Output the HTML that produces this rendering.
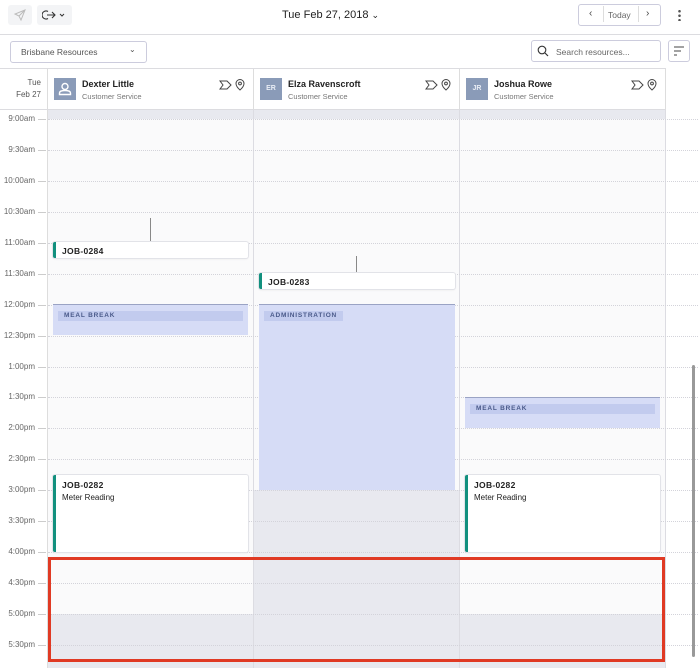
<!DOCTYPE html>
<html><head><meta charset="utf-8"><style>
*{box-sizing:border-box;margin:0;padding:0}
body{width:700px;height:668px;overflow:hidden;background:#fff;font-family:"Liberation Sans",sans-serif;position:relative;color:#222}
.a{position:absolute}
.btn{border:1px solid #ccd;border-radius:3px;background:#fff}
.tl{position:absolute;left:0;width:35px;text-align:right;font-size:8px;color:#666}
.tick{position:absolute;left:38px;width:8px;height:1px;background:#ccc}
.hl{position:absolute;left:48px;width:650px;height:0;border-top:1px dotted #d3d3da}
.job{position:absolute;background:#fff;border-radius:2px;box-shadow:0 0 0 1px #e2e3e8,0 1px 2px rgba(0,0,0,.08);border-left:3px solid #12907e;font-size:8px;padding:5px 0 0 6px}
.job b{font-size:8.5px;letter-spacing:.3px}
.brk{position:absolute;background:#d6dcf6;border-top:1px solid #9aa3c4}
.brk span{position:absolute;left:5px;top:6px;height:10px;background:#c2cbee;font-size:6.5px;letter-spacing:.8px;color:#4a5a8a;padding:1px 6px;font-weight:bold}
.hd{position:absolute;top:69px;height:41px;border-right:1px solid #ddd}
.av{position:absolute;left:6px;top:9px;width:22px;height:22px;background:#8a9bb8;color:#e9edf5;font-size:7px;text-align:center;line-height:22px;font-weight:bold}
.nm{position:absolute;left:34px;top:10px;font-size:9px;font-weight:bold;color:#222}
.sb{position:absolute;left:34px;top:23px;font-size:7.5px;color:#777}
</style></head><body>
<div class="a" style="left:8px;top:5px;width:24px;height:20px;background:#f3f4f6;border-radius:3px"></div>
<svg class="a" style="left:13px;top:8px" width="14" height="14" viewBox="0 0 14 14"><path d="M12 2L2 6l4 2 2 4z M6 8l6-6" fill="none" stroke="#bbb" stroke-width="1"/></svg>
<div class="a" style="left:37px;top:5px;width:35px;height:20px;background:#f3f4f6;border-radius:3px"></div>
<svg class="a" style="left:42px;top:8px" width="26" height="14" viewBox="0 0 26 14"><path d="M6 3.5A4 4 0 1 0 6 10.5 M5 7h8 M10 4l3 3-3 3" fill="none" stroke="#333" stroke-width="1.1"/><path d="M18 6l2 2 2-2" fill="none" stroke="#333" stroke-width="1"/></svg>
<div class="a" style="left:282px;top:9px;font-size:11px;color:#222">Tue Feb 27, 2018 <span style="font-size:9px">⌄</span></div>
<div class="a btn" style="left:578px;top:4px;width:83px;height:22px"></div>
<div class="a" style="left:589px;top:8px;font-size:10px;color:#444">‹</div>
<div class="a" style="left:603px;top:6px;width:1px;height:16px;background:#ddd"></div>
<div class="a" style="left:608px;top:10px;font-size:8.5px;color:#666">Today</div>
<div class="a" style="left:638px;top:6px;width:1px;height:16px;background:#ddd"></div>
<div class="a" style="left:646px;top:8px;font-size:10px;color:#444">›</div>
<div class="a" style="left:678px;top:9px;width:3px;height:12px;background:radial-gradient(circle,#555 1.2px,transparent 1.4px) 0 0/3px 4.5px"></div>
<div class="a" style="left:0;top:34px;width:700px;height:1px;background:#dcdce0"></div>
<div class="a btn" style="left:10px;top:41px;width:137px;height:22px;background:#fff"></div>
<div class="a" style="left:21px;top:47px;font-size:8.5px;color:#555">Brisbane Resources</div>
<div class="a" style="left:129px;top:45px;font-size:8px;color:#555">⌄</div>
<div class="a btn" style="left:531px;top:40px;width:130px;height:22px"></div>
<svg class="a" style="left:537px;top:45px" width="12" height="12" viewBox="0 0 12 12"><circle cx="5" cy="5" r="3.8" fill="none" stroke="#333" stroke-width="1.1"/><path d="M8 8l3 3" stroke="#333" stroke-width="1.2"/></svg>
<div class="a" style="left:556px;top:47px;font-size:8.5px;color:#666">Search resources...</div>
<div class="a btn" style="left:668px;top:40px;width:22px;height:22px"></div>
<svg class="a" style="left:672px;top:45px" width="14" height="12" viewBox="0 0 14 12"><path d="M2 2h10M2 6h7M2 10h3" stroke="#444" stroke-width="1"/></svg>
<div class="a" style="left:0;top:68px;width:666px;height:1px;background:#dcdce0"></div>
<div class="a" style="left:0;top:77px;width:41px;text-align:right;font-size:8px;color:#555;line-height:12px">Tue<br>Feb 27</div>
<div class="a" style="left:47px;top:69px;width:1px;height:599px;background:#ddd"></div>
<div class="hd" style="left:48px;width:206px"><div class="av"><svg width="22" height="22" viewBox="0 0 22 22"><circle cx="11" cy="8.5" r="3" fill="none" stroke="#fff" stroke-width="1.4"/><path d="M5.5 16.5v-1.5c0-1.5 2-2.5 5.5-2.5s5.5 1 5.5 2.5v1.5z" fill="none" stroke="#fff" stroke-width="1.4"/></svg></div><div class="nm">Dexter Little</div><div class="sb">Customer Service</div></div>
<div class="hd" style="left:254px;width:206px"><div class="av">ER</div><div class="nm">Elza Ravenscroft</div><div class="sb">Customer Service</div></div>
<div class="hd" style="left:460px;width:206px"><div class="av">JR</div><div class="nm">Joshua Rowe</div><div class="sb">Customer Service</div></div>
<svg class="a" style="left:218px;top:78px" width="30" height="14" viewBox="0 0 30 14"><path d="M2 3h7l4 4-4 4H2l3-4z" fill="none" stroke="#444" stroke-width="1"/><path d="M22 12s-4-3.5-4-6.5a4 4 0 0 1 8 0c0 3-4 6.5-4 6.5z" fill="none" stroke="#444" stroke-width="1"/><circle cx="22" cy="5.5" r="1.4" fill="none" stroke="#444"/></svg>
<svg class="a" style="left:424px;top:78px" width="30" height="14" viewBox="0 0 30 14"><path d="M2 3h7l4 4-4 4H2l3-4z" fill="none" stroke="#444" stroke-width="1"/><path d="M22 12s-4-3.5-4-6.5a4 4 0 0 1 8 0c0 3-4 6.5-4 6.5z" fill="none" stroke="#444" stroke-width="1"/><circle cx="22" cy="5.5" r="1.4" fill="none" stroke="#444"/></svg>
<svg class="a" style="left:630px;top:78px" width="30" height="14" viewBox="0 0 30 14"><path d="M2 3h7l4 4-4 4H2l3-4z" fill="none" stroke="#444" stroke-width="1"/><path d="M22 12s-4-3.5-4-6.5a4 4 0 0 1 8 0c0 3-4 6.5-4 6.5z" fill="none" stroke="#444" stroke-width="1"/><circle cx="22" cy="5.5" r="1.4" fill="none" stroke="#444"/></svg>
<div class="a" style="left:0;top:109px;width:666px;height:1px;background:#dcdce0"></div>
<div class="a" style="left:48px;top:110px;width:618px;height:558px;background:#fafafb"></div>
<div class="a" style="left:48px;top:110px;width:618px;height:9px;background:#e8e9ef"></div>
<div class="a" style="left:254px;top:490px;width:206px;height:178px;background:#e8e9ef"></div>
<div class="a" style="left:48px;top:614px;width:618px;height:54px;background:#e8e9ef"></div>
<div class="a" style="left:253px;top:110px;width:1px;height:558px;background:#dcdce2"></div>
<div class="a" style="left:459px;top:110px;width:1px;height:558px;background:#dcdce2"></div>
<div class="a" style="left:665px;top:110px;width:1px;height:558px;background:#dcdce2"></div>
<div id="g"></div>
<script>
var L=["9:00am","9:30am","10:00am","10:30am","11:00am","11:30am","12:00pm","12:30pm","1:00pm","1:30pm","2:00pm","2:30pm","3:00pm","3:30pm","4:00pm","4:30pm","5:00pm","5:30pm"],h="";
for(var i=0;i<L.length;i++){var y=Math.round(119+i*30.94);h+='<div class="hl" style="top:'+y+'px"></div><div class="tick" style="top:'+y+'px"></div><div class="tl" style="top:'+(y-5)+'px">'+L[i]+'</div>';}
document.getElementById("g").innerHTML=h;
</script>
<div class="a" style="left:150px;top:218px;width:1px;height:24px;background:#888"></div>
<div class="job" style="left:53px;top:242px;width:195px;height:16px;padding-top:4px"><b>JOB-0284</b></div>
<div class="a" style="left:356px;top:256px;width:1px;height:17px;background:#888"></div>
<div class="job" style="left:259px;top:273px;width:196px;height:16px;padding-top:4px"><b>JOB-0283</b></div>
<div class="brk" style="left:53px;top:304px;width:195px;height:31px"><span style="width:185px">MEAL BREAK</span></div>
<div class="brk" style="left:259px;top:304px;width:196px;height:186px"><span>ADMINISTRATION</span></div>
<div class="brk" style="left:465px;top:397px;width:195px;height:31px"><span style="width:185px">MEAL BREAK</span></div>
<div class="job" style="left:53px;top:475px;width:195px;height:77px"><b>JOB-0282</b><div style="margin-top:3px">Meter Reading</div></div>
<div class="job" style="left:465px;top:475px;width:195px;height:77px"><b>JOB-0282</b><div style="margin-top:3px">Meter Reading</div></div>
<div class="a" style="left:692px;top:365px;width:3px;height:292px;background:#999;border-radius:2px"></div>
<div class="a" style="left:48px;top:557px;width:617px;height:105px;border:3px solid #e03a24"></div>
</body></html>
